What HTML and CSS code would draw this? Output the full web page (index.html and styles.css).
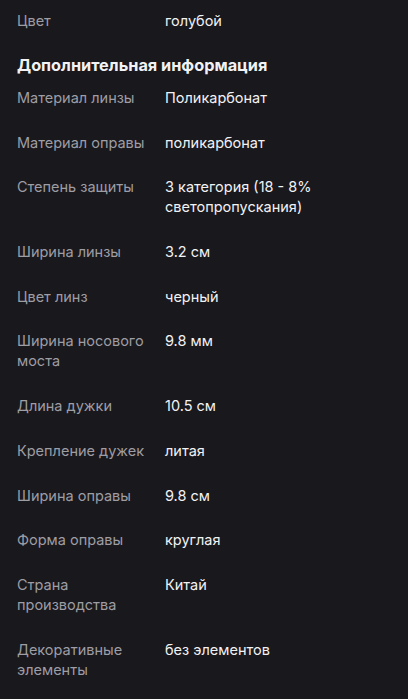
FILE: index.html
```html
<!DOCTYPE html>
<html lang="ru">
<head>
  <meta charset="UTF-8" />
  <meta name="viewport" content="width=device-width, initial-scale=1.0"/>
  <title>Характеристики</title>
  <link rel="stylesheet" href="styles.css">
</head>
<body>
  <dl class="specs top">
    <dt>Цвет</dt><dd>голубой</dd>
  </dl>

  <h2>Дополнительная информация</h2>

  <dl class="specs">
    <dt>Материал линзы</dt><dd>Поликарбонат</dd>
    <dt>Материал оправы</dt><dd>поликарбонат</dd>
    <dt>Степень защиты</dt><dd>3 категория (18 - 8% светопропускания)</dd>
    <dt>Ширина линзы</dt><dd>3.2 см</dd>
    <dt>Цвет линз</dt><dd>черный</dd>
    <dt>Ширина носового моста</dt><dd>9.8 мм</dd>
    <dt>Длина дужки</dt><dd>10.5 см</dd>
    <dt>Крепление дужек</dt><dd>литая</dd>
    <dt>Ширина оправы</dt><dd>9.8 см</dd>
    <dt>Форма оправы</dt><dd>круглая</dd>
    <dt>Страна производства</dt><dd>Китай</dd>
    <dt>Декоративные элементы</dt><dd>без элементов</dd>
  </dl>
</body>
</html>
```

FILE: styles.css
```css
body {
  margin: 0;
  padding: 11px 17px 40px;
  background: #19181d;
  color: #f2f2f4;
  font-family: Inter, "Noto Sans", sans-serif;
  font-size: 14.5px;
  line-height: 20px;
}

.specs {
  display: grid;
  grid-template-columns: 148px 1fr;
  row-gap: 24.7px;
  margin: 0;
}

.specs dt {
  color: #9e9da4;
}

.specs dd {
  margin: 0;
}

h2 {
  margin: 23px 0 12px;
  font-size: 16.3px;
  line-height: 22px;
  font-weight: 700;
}
```
